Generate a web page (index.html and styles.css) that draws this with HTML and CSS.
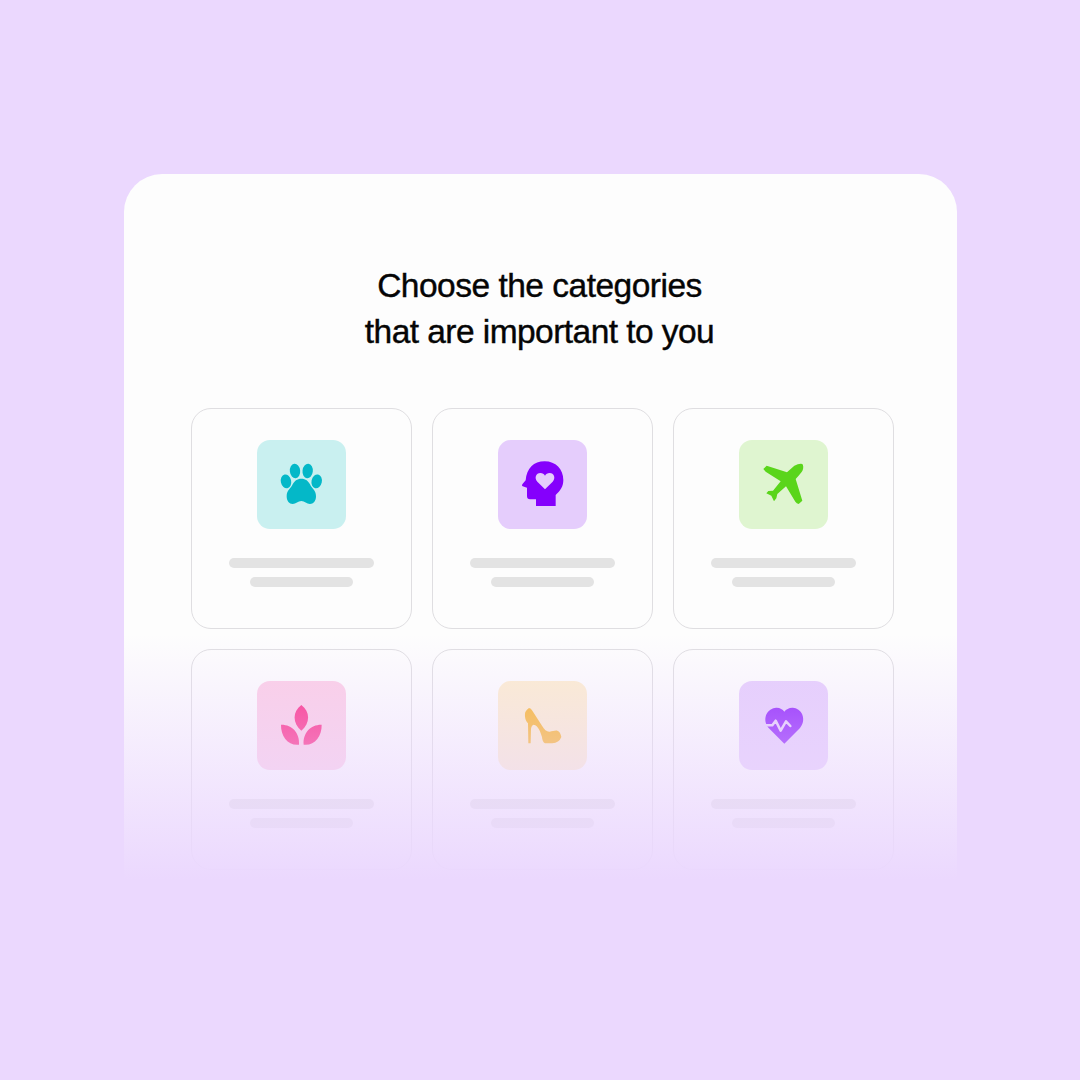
FILE: index.html
```html
<!DOCTYPE html>
<html lang="en">
<head>
<meta charset="utf-8">
<title>Choose categories</title>
<link rel="stylesheet" href="styles.css">
</head>
<body>
<main class="panel">
  <h1 class="title"><span class="line first">Choose the categories</span><span class="line second">that are important to you</span></h1>
  <div class="grid">
    <div class="card">
      <div class="tile teal"><svg viewBox="21 24 267 267"><ellipse cx="135" cy="117" rx="15.5" ry="21.5" transform="rotate(-6 135 117)"/><ellipse cx="173" cy="117" rx="15.5" ry="21.5" transform="rotate(6 173 117)"/><ellipse cx="108" cy="148" rx="15.5" ry="21" transform="rotate(-12 108 148)"/><ellipse cx="200" cy="148" rx="15.5" ry="21" transform="rotate(12 200 148)"/><path d="M154 140C167 140 175 147 180 157C185 169 198 174 198 193C198 208 190 216 180 216C170 216 164 207 154 207C144 207 138 216 128 216C118 216 110 208 110 193C110 174 123 169 128 157C133 147 141 140 154 140Z"/></svg></div>
      <span class="bar"></span><span class="bar short"></span>
    </div>
    <div class="card">
      <div class="tile violet"><svg viewBox="24 24 267 267"><path fill-rule="evenodd" d="M138 222V202H120Q111 202 111 192V167L98 163Q94 161 97 157L107 145C110 109 131 88 164 88C197 88 220 112 220 144C220 163 211 176 197 189V222ZM165 172L188 149C198 138 192 123 179 123C172 123 168 126 165 131C162 126 158 123 151 123C138 123 132 138 142 149Z"/></svg></div>
      <span class="bar"></span><span class="bar short"></span>
    </div>
    <div class="card">
      <div class="tile green"><svg viewBox="24 24 267 267"><path d="M97 111L107 101L168 121L190 101Q204 94 214 96Q219 103 215 115Q212 122 194 141L214 206L203 216Q197 215 193 209L165 163L139 186L136 199L129 208L121 191L106 184L112 177L126 176L149 148L104 119Z"/></svg></div>
      <span class="bar"></span><span class="bar short"></span>
    </div>
    <div class="card">
      <div class="tile pink"><svg viewBox="21 24 267 267"><path d="M154 96C181 116 181 151 154 173C127 151 127 116 154 96ZM93 155C125 154 150 179 147 215C115 219 92 190 93 155ZM215 155C183 154 158 179 161 215C193 219 216 190 215 155Z"/></svg></div>
      <span class="bar"></span><span class="bar short"></span>
    </div>
    <div class="card">
      <div class="tile amber"><svg viewBox="24 24 267 267"><path d="M117 105Q123 106 127 113L156 158C163 170 171 177 179 176C188 175 193 172 202 173Q211 176 214 192Q207 210 187 211H165Q157 207 156 192C151 176 145 158 131 155Q124 157 123 168L122 211H115L114 151C106 144 103 128 106 117Q110 109 117 105Z"/></svg></div>
      <span class="bar"></span><span class="bar short"></span>
    </div>
    <div class="card">
      <div class="tile purple"><svg viewBox="24 24 267 267"><path d="M160 212L113 165C94 143 104 109 132 105C145 103 154 109 160 116C166 109 176 103 189 105C216 109 226 143 207 165Z"/><path class="pulse" d="M101 157H124L134 143L149 173L165 145L178 159"/></svg></div>
      <span class="bar"></span><span class="bar short"></span>
    </div>
  </div>
  <div class="fade"></div>
</main>
</body>
</html>
```

FILE: styles.css
```css
* { box-sizing: border-box; }
body {
  margin: 0;
  height: 1080px;
  padding: 174px 123px 0 124px;
  background: #ebd8fe;
  font-family: "Liberation Sans", Arial, sans-serif;
  overflow: hidden;
}
.panel {
  position: relative;
  height: 706px;
  padding: 89px 63px 0 67px;
  border-radius: 38px 38px 0 0;
  background: #fdfdfd;
  overflow: hidden;
}
.title {
  margin: 0 0 53px;
  font-size: 33.5px;
  line-height: 46px;
  font-weight: 400;
  color: #050505;
  -webkit-text-stroke: 0.4px #050505;
  text-align: center;
  white-space: nowrap;
}
.line { display: block; margin-right: 6px; }
.first { letter-spacing: -0.5px; }
.second { letter-spacing: -0.55px; }
.grid {
  display: grid;
  grid-template-columns: repeat(3, 221px);
  grid-auto-rows: 221px;
  gap: 20px;
}
.card {
  display: flex;
  flex-direction: column;
  align-items: center;
  padding-top: 30.5px;
  border: 1.5px solid #dfdee1;
  border-radius: 20px;
}
.tile {
  width: 89px;
  height: 89px;
  margin-bottom: 29.5px;
  border-radius: 13px;
}
.tile svg { display: block; width: 89px; height: 89px; fill: currentColor; }
.teal { background: #c9f0f0; color: #04b8c8; }
.violet { background: #e5cdfc; color: #8500fc; }
.green { background: #dff5d0; color: #5ad51b; }
.pink { background: #fccde5; color: #fc2280; }
.amber { background: #fdedcd; color: #f9b320; }
.purple { background: #e5cdfc; color: #8a19fb; }
.pulse { fill: none; stroke: #e5cdfc; stroke-width: 7.5; stroke-linejoin: round; stroke-linecap: round; }
.bar { width: 145px; height: 9.5px; margin: 0 1px 9.5px 0; border-radius: 5px; background: #e3e3e3; }
.short { width: 103px; }
.fade {
  position: absolute;
  inset: 460px 0 0;
  background: linear-gradient(rgba(235, 216, 254, 0), #ebd8fe);
}
```
